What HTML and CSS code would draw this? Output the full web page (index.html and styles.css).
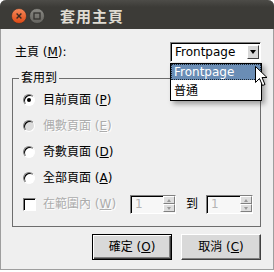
FILE: index.html
```html
<!DOCTYPE html>
<html lang="zh-Hant">
<head>
    <meta charset="UTF-8">
    <title>套用主頁</title>
    <link rel="stylesheet" href="styles.css">
</head>
<body>
    <div class="window">
        <div class="titlebar">
            <svg class="win-btn" width="16" height="16" viewBox="0 0 16 16">
                <defs>
                    <linearGradient id="closeGrad" x1="0" y1="0" x2="0" y2="1">
                        <stop offset="0" stop-color="#f6895a"/>
                        <stop offset="1" stop-color="#dd4814"/>
                    </linearGradient>
                </defs>
                <circle cx="8" cy="8" r="7.5" fill="url(#closeGrad)" stroke="#2e2d2a" stroke-width="0.6"/>
                <path d="M5.6 5.6 L10.4 10.4 M10.4 5.6 L5.6 10.4" stroke="#3a2a22" stroke-width="1.4"/>
            </svg>
            <svg class="win-btn" width="16" height="16" viewBox="0 0 16 16">
                <defs>
                    <linearGradient id="maxGrad" x1="0" y1="0" x2="0" y2="1">
                        <stop offset="0" stop-color="#8a8984"/>
                        <stop offset="1" stop-color="#64635e"/>
                    </linearGradient>
                </defs>
                <circle cx="8" cy="8" r="7.5" fill="url(#maxGrad)" stroke="#2e2d2a" stroke-width="0.6"/>
                <rect x="5" y="5" width="6" height="6" fill="none" stroke="#33322f" stroke-width="1.3"/>
            </svg>
            <span class="title">套用主頁</span>
        </div>

        <div class="content">
            <div class="page-row">
                <span class="page-label">主頁 (<u>M</u>):</span>
                <div class="combo">
                    <span class="combo-text">Frontpage</span>
                    <span class="combo-btn"><span class="arrow-down"></span></span>
                    <ul class="dropdown">
                        <li class="item selected">Frontpage</li>
                        <li class="item">普通</li>
                        <svg class="cursor" width="13" height="21" viewBox="0 0 13 21">
                            <path d="M0.5 0.5 L0.5 16.5 L4.5 12.5 L7.5 19.5 L10 18.5 L7 11.5 L12 11.5 Z" fill="#fff" stroke="#000" stroke-width="1"/>
                        </svg>
                    </ul>
                </div>
            </div>

            <fieldset class="group">
                <legend>套用到</legend>
                <div class="option">
                    <span class="radio checked"></span>
                    <span>目前頁面 (<u>P</u>)</span>
                </div>
                <div class="option">
                    <span class="radio disabled-radio"></span>
                    <span class="disabled">偶數頁面 (<u>E</u>)</span>
                </div>
                <div class="option">
                    <span class="radio"></span>
                    <span>奇數頁面 (<u>D</u>)</span>
                </div>
                <div class="option">
                    <span class="radio"></span>
                    <span>全部頁面 (<u>A</u>)</span>
                </div>
                <div class="option range">
                    <span class="check"></span>
                    <span class="range-label disabled">在範圍內 (<u>W</u>)</span>
                    <div class="spin from">
                        <span class="spin-value">1</span>
                        <span class="spin-btns">
                            <span class="spin-btn"><span class="tri-up"></span></span>
                            <span class="spin-btn"><span class="tri-down"></span></span>
                        </span>
                    </div>
                    <span class="to">到</span>
                    <div class="spin until">
                        <span class="spin-value">1</span>
                        <span class="spin-btns">
                            <span class="spin-btn"><span class="tri-up"></span></span>
                            <span class="spin-btn"><span class="tri-down"></span></span>
                        </span>
                    </div>
                </div>
            </fieldset>

            <div class="buttons">
                <button class="btn default">確定 (<u>O</u>)</button>
                <button class="btn">取消 (<u>C</u>)</button>
            </div>
        </div>
    </div>
</body>
</html>
```

FILE: styles.css
```css
* {
    box-sizing: border-box;
}

html {
    background-color: #fff;
}

body {
    margin: 0;
    font-family: "DejaVu Sans", "Noto Sans CJK TC", sans-serif;
    font-size: 12px;
    line-height: 14px;
    color: #000;
}

.window {
    width: 274px;
    height: 270px;
    background-color: #efefef;
    border-radius: 6px 6px 0 0;
    box-shadow: inset 1px 0 #9e9e9e, inset -1px 0 #9e9e9e, inset 0 -1px #9e9e9e;
}

/* title bar */
.titlebar {
    height: 29px;
    display: flex;
    align-items: center;
    gap: 2px;
    padding-left: 11px;
    padding-top: 2px;
    background: linear-gradient(#4d4c48 0, #3c3b37 7px);
    border-radius: 6px 6px 0 0;
}

.win-btn {
    display: block;
}

.title {
    margin-left: 13px;
    color: #dfdbd2;
    font-family: "Noto Sans CJK TC", sans-serif;
    font-size: 15px;
    font-weight: bold;
    letter-spacing: 1px;
    line-height: 16px;
}

.content {
    padding: 13px 13px 0 12px;
}

/* page combo */
.page-row {
    display: flex;
    justify-content: space-between;
    align-items: center;
    height: 20px;
}

.page-label {
    padding-left: 3px;
}

.combo {
    position: relative;
    width: 91px;
    height: 20px;
    display: flex;
    align-items: center;
    padding-left: 4px;
    background-color: #fff;
    border: 1px solid;
    border-color: #808080 #fff #fff #808080;
    box-shadow: inset 1px 1px 0 #000;
}

.combo-btn {
    margin-left: auto;
    margin-right: 1px;
    width: 12px;
    height: 14px;
    display: flex;
    align-items: center;
    justify-content: center;
    background-color: #d8d8d8;
    border: 1px solid;
    border-color: #fff #404040 #404040 #fff;
}

.arrow-down {
    width: 1px;
    height: 0;
    border-left: 3px solid transparent;
    border-right: 3px solid transparent;
    border-top: 4px solid #000;
}

.dropdown {
    position: absolute;
    left: -1px;
    top: 20px;
    z-index: 2;
    width: 92px;
    margin: 0;
    padding: 0;
    list-style: none;
    background-color: #fff;
    border: 1px solid #000;
    box-shadow: 3px 3px 5px rgba(0, 0, 0, 0.35);
}

.item {
    height: 16px;
    padding: 0 2px;
    border: 1px solid transparent;
    line-height: 14px;
}

.item + .item {
    height: 20px;
    padding-top: 3px;
}

.item.selected {
    background-color: #6a8db5;
    color: #fff;
    border: 1px dotted #1c2733;
}

.cursor {
    position: absolute;
    left: 84px;
    top: 2px;
}

/* option group */
.group {
    margin: 9px 0 0 0;
    padding: 2px 6px 9px 6px;
    border: 1px solid #6d6d6d;
    min-width: 0;
}

.group legend {
    padding: 0 2px;
}

.option {
    display: flex;
    align-items: center;
    gap: 8px;
    height: 26px;
    padding-left: 4px;
}

.radio {
    position: relative;
    width: 12px;
    height: 12px;
    border-radius: 50%;
    background-color: #fff;
    border: 1px solid;
    border-color: #808080 #fff #fff #808080;
    box-shadow: inset 1px 1px 0 #000;
}

.radio.checked::after {
    content: "";
    position: absolute;
    left: 3px;
    top: 3px;
    width: 4px;
    height: 4px;
    border-radius: 50%;
    background-color: #000;
}

.radio.disabled-radio {
    background-color: #dcdcdc;
}

.disabled {
    color: #acacac;
    text-shadow: 1px 1px 0 #fff;
}

.option.range {
    gap: 0;
}

.check {
    width: 13px;
    height: 13px;
    margin-right: 7px;
    background-color: #fff;
    border: 1px solid;
    border-color: #808080 #fff #fff #808080;
    box-shadow: inset 1px 1px 0 #000;
}

.range-label {
    width: 87px;
}

.spin {
    width: 46px;
    height: 19px;
    display: flex;
    align-items: center;
    padding-left: 4px;
    background-color: #f7f7f7;
    border: 1px solid;
    border-color: #808080 #fff #fff #808080;
    box-shadow: inset 1px 1px 0 #000;
    color: #b4b4b4;
}

.spin.until {
    width: 47px;
}

.to {
    margin: 0 8px 0 10px;
}

.spin-btns {
    margin-left: auto;
    margin-right: 0;
    display: flex;
    flex-direction: column;
}

.spin-btn {
    width: 12px;
    height: 8px;
    display: flex;
    align-items: center;
    justify-content: center;
    background-color: #dedede;
    border: 1px solid;
    border-color: #fff #808080 #808080 #fff;
}

.tri-up,
.tri-down {
    width: 1px;
    height: 0;
    border-left: 2px solid transparent;
    border-right: 2px solid transparent;
}

.tri-up {
    border-bottom: 3px solid #9a9a9a;
}

.tri-down {
    border-top: 3px solid #9a9a9a;
}

/* dialog buttons */
.buttons {
    display: flex;
    justify-content: flex-end;
    gap: 9px;
    margin-top: 7px;
}

.btn {
    width: 80px;
    height: 26px;
    padding: 0;
    font: inherit;
    color: #000;
    background-color: #d9d9d9;
    border: 1px solid;
    border-color: #fff #404040 #404040 #fff;
    box-shadow: inset -1px -1px 0 #808080;
}

.btn.default {
    border: 1px solid #000;
    box-shadow: inset 1px 1px 0 #fff, inset -1px -1px 0 #404040, inset -2px -2px 0 #808080;
}
```
